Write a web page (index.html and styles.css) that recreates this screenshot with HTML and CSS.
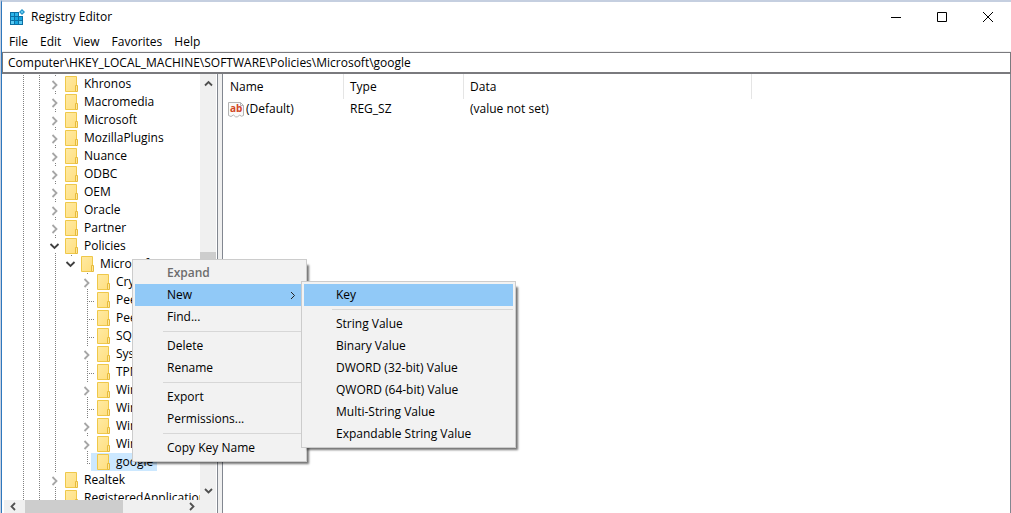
FILE: index.html
```html
<!DOCTYPE html>
<html lang="en">
<head>
<meta charset="utf-8">
<title>Registry Editor</title>
<link rel="stylesheet" href="styles.css">
</head>
<body>
<svg class="defs" aria-hidden="true">
  <defs>
    <linearGradient id="paper" x1="0" y1="0" x2="1" y2="1">
      <stop offset="0" stop-color="#ffeaa3"/>
      <stop offset="1" stop-color="#ffdf80"/>
    </linearGradient>
    <symbol id="folder" viewBox="0 0 16 18">
      <path d="M2.5 1.5h11v15h-11z" fill="url(#paper)" stroke="#efc84a"/>
      <path d="M12.5 10.5h2v6h-2z" fill="#ffe79a" stroke="#e6bb3c"/>
    </symbol>
    <symbol id="closed" viewBox="0 0 16 18">
      <path d="M5.5 6l4 4-4 4" fill="none" stroke="#a6a6a6" stroke-width="1.8"/>
    </symbol>
    <symbol id="open" viewBox="0 0 16 18">
      <path d="M3.5 7l4 4 4-4" fill="none" stroke="#404040" stroke-width="1.8"/>
    </symbol>
  </defs>
</svg>
<main class="window">
  <header class="titlebar">
    <svg class="app-icon" width="16" height="16" viewBox="0 0 16 16" aria-hidden="true">
      <path d="M1 3h9v4h4v9H1z" fill="#0b6fa4"/>
      <path d="M2 4h3v3H2zM6 4h3v3H6zM2 8h3v3H2z" fill="#2cb4ea"/>
      <path d="M6 8h3v3H6zM10 8h3v3h-3zM6 12h3v3H6z" fill="#16a5e0"/>
      <path d="M2 12h3v3H2zM10 12h3v3h-3z" fill="#5ccbf3"/>
      <path d="M13 0l3 3-3 3-3-3z" fill="#1b8fc6"/>
      <path d="M13 1.500l1.500 1.500L13 4.500 11.500 3z" fill="#6fd0f2"/>
    </svg>
    <h1 class="title">Registry Editor</h1>
    <div class="captions">
      <button class="caption" aria-label="Minimize"><svg width="10" height="10" viewBox="0 0 10 10"><path d="M0 5.500h10" stroke="#000"/></svg></button>
      <button class="caption" aria-label="Maximize"><svg width="10" height="10" viewBox="0 0 10 10"><path d="M.5.5h9v9h-9z" fill="none" stroke="#000"/></svg></button>
      <button class="caption" aria-label="Close"><svg width="10" height="10" viewBox="0 0 10 10"><path d="M0 0l10 10M10 0L0 10" stroke="#000"/></svg></button>
    </div>
  </header>
  <nav class="menubar" aria-label="Main menu">
    <button class="menu-title">File</button>
    <button class="menu-title">Edit</button>
    <button class="menu-title">View</button>
    <button class="menu-title">Favorites</button>
    <button class="menu-title">Help</button>
  </nav>
  <input class="address" aria-label="Address" spellcheck="false" value="Computer\HKEY_LOCAL_MACHINE\SOFTWARE\Policies\Microsoft\google">
  <div class="panes">
    <section class="tree-pane" aria-label="Keys">
      <ul class="tree">
        <li class="node"><i class="guide"></i><i class="guide"></i><svg class="toggle"><use href="#closed"/></svg><svg class="icon"><use href="#folder"/></svg><span class="name">Khronos</span></li>
        <li class="node"><i class="guide"></i><i class="guide"></i><svg class="toggle"><use href="#closed"/></svg><svg class="icon"><use href="#folder"/></svg><span class="name">Macromedia</span></li>
        <li class="node"><i class="guide"></i><i class="guide"></i><svg class="toggle"><use href="#closed"/></svg><svg class="icon"><use href="#folder"/></svg><span class="name">Microsoft</span></li>
        <li class="node"><i class="guide"></i><i class="guide"></i><svg class="toggle"><use href="#closed"/></svg><svg class="icon"><use href="#folder"/></svg><span class="name">MozillaPlugins</span></li>
        <li class="node"><i class="guide"></i><i class="guide"></i><svg class="toggle"><use href="#closed"/></svg><svg class="icon"><use href="#folder"/></svg><span class="name">Nuance</span></li>
        <li class="node"><i class="guide"></i><i class="guide"></i><svg class="toggle"><use href="#closed"/></svg><svg class="icon"><use href="#folder"/></svg><span class="name">ODBC</span></li>
        <li class="node"><i class="guide"></i><i class="guide"></i><svg class="toggle"><use href="#closed"/></svg><svg class="icon"><use href="#folder"/></svg><span class="name">OEM</span></li>
        <li class="node"><i class="guide"></i><i class="guide"></i><svg class="toggle"><use href="#closed"/></svg><svg class="icon"><use href="#folder"/></svg><span class="name">Oracle</span></li>
        <li class="node"><i class="guide"></i><i class="guide"></i><svg class="toggle"><use href="#closed"/></svg><svg class="icon"><use href="#folder"/></svg><span class="name">Partner</span></li>
        <li class="node"><i class="guide"></i><i class="guide"></i><svg class="toggle"><use href="#open"/></svg><svg class="icon"><use href="#folder"/></svg><span class="name">Policies</span></li>
        <li class="node"><i class="guide"></i><i class="guide"></i><i class="guide"></i><svg class="toggle last"><use href="#open"/></svg><svg class="icon"><use href="#folder"/></svg><span class="name">Microsoft</span></li>
        <li class="node"><i class="guide"></i><i class="guide"></i><i class="guide"></i><i class="blank"></i><svg class="toggle"><use href="#closed"/></svg><svg class="icon"><use href="#folder"/></svg><span class="name">Crypto</span></li>
        <li class="node"><i class="guide"></i><i class="guide"></i><i class="guide"></i><i class="blank"></i><i class="guide branch"></i><svg class="icon"><use href="#folder"/></svg><span class="name">PeerDist</span></li>
        <li class="node"><i class="guide"></i><i class="guide"></i><i class="guide"></i><i class="blank"></i><i class="guide branch"></i><svg class="icon"><use href="#folder"/></svg><span class="name">Peernet</span></li>
        <li class="node"><i class="guide"></i><i class="guide"></i><i class="guide"></i><i class="blank"></i><i class="guide branch"></i><svg class="icon"><use href="#folder"/></svg><span class="name">SQM</span></li>
        <li class="node"><i class="guide"></i><i class="guide"></i><i class="guide"></i><i class="blank"></i><svg class="toggle"><use href="#closed"/></svg><svg class="icon"><use href="#folder"/></svg><span class="name">System</span></li>
        <li class="node"><i class="guide"></i><i class="guide"></i><i class="guide"></i><i class="blank"></i><i class="guide branch"></i><svg class="icon"><use href="#folder"/></svg><span class="name">TPM</span></li>
        <li class="node"><i class="guide"></i><i class="guide"></i><i class="guide"></i><i class="blank"></i><svg class="toggle"><use href="#closed"/></svg><svg class="icon"><use href="#folder"/></svg><span class="name">Windows</span></li>
        <li class="node"><i class="guide"></i><i class="guide"></i><i class="guide"></i><i class="blank"></i><i class="guide branch"></i><svg class="icon"><use href="#folder"/></svg><span class="name">Windows</span></li>
        <li class="node"><i class="guide"></i><i class="guide"></i><i class="guide"></i><i class="blank"></i><svg class="toggle"><use href="#closed"/></svg><svg class="icon"><use href="#folder"/></svg><span class="name">Windows</span></li>
        <li class="node"><i class="guide"></i><i class="guide"></i><i class="guide"></i><i class="blank"></i><svg class="toggle"><use href="#closed"/></svg><svg class="icon"><use href="#folder"/></svg><span class="name">Windows</span></li>
        <li class="node"><i class="guide"></i><i class="guide"></i><i class="guide"></i><i class="blank"></i><i class="branch end"></i><span class="selected"><svg class="icon"><use href="#folder"/></svg><span class="name">google</span></span></li>
        <li class="node"><i class="guide"></i><i class="guide"></i><svg class="toggle"><use href="#closed"/></svg><svg class="icon"><use href="#folder"/></svg><span class="name">Realtek</span></li>
        <li class="node"><i class="guide"></i><i class="guide"></i><i class="guide"></i><svg class="icon"><use href="#folder"/></svg><span class="name">RegisteredApplications</span></li>
      </ul>
      <div class="vscroll">
        <button class="arrow" aria-label="Scroll up"><svg width="9" height="9" viewBox="0 0 9 9"><path d="M1 6.500l3.500-3.500 3.500 3.500" fill="none" stroke="#505050" stroke-width="1.800"/></svg></button>
        <div class="vthumb"></div>
        <button class="arrow" aria-label="Scroll down"><svg width="9" height="9" viewBox="0 0 9 9"><path d="M1 3l3.500 3.500L8 3" fill="none" stroke="#505050" stroke-width="1.800"/></svg></button>
      </div>
      <div class="hscroll">
        <button class="arrow" aria-label="Scroll left"><svg width="9" height="9" viewBox="0 0 9 9"><path d="M6 1L2.500 4.500 6 8" fill="none" stroke="#505050" stroke-width="1.800"/></svg></button>
        <div class="hthumb"></div>
        <button class="arrow" aria-label="Scroll right"><svg width="9" height="9" viewBox="0 0 9 9"><path d="M3 1l3.500 3.500L3 8" fill="none" stroke="#505050" stroke-width="1.800"/></svg></button>
      </div>
    </section>
    <section class="value-pane" aria-label="Values">
      <table class="values">
        <thead>
          <tr><th class="col-name">Name</th><th class="col-type">Type</th><th class="col-data">Data</th><th class="col-rest"></th></tr>
        </thead>
        <tbody>
          <tr>
            <td><span class="value"><svg width="17" height="17" viewBox="0 0 17 17" aria-hidden="true"><path d="M.5 1.500h12l3 3v10l-2 .8-2-1.300-2 2-2-.2-2-1.800-2.500 1.500-2.500-1z" fill="#fafafa" stroke="#b4b4b4"/><path d="M12.500 1.500v3h3" fill="none" stroke="#b4b4b4"/><text class="glyph" x="2" y="11">ab</text></svg>(Default)</span></td>
            <td>REG_SZ</td><td>(value not set)</td><td></td>
          </tr>
        </tbody>
      </table>
    </section>
  </div>
</main>
<div class="menu context" role="menu">
  <button class="item default" disabled role="menuitem">Expand</button>
  <button class="item active" role="menuitem">New<svg width="6" height="9" viewBox="0 0 6 9" aria-hidden="true"><path d="M1 1l3.500 3.500L1 8" fill="none" stroke="#222"/></svg></button>
  <button class="item" role="menuitem">Find...</button>
  <hr class="rule">
  <button class="item" role="menuitem">Delete</button>
  <button class="item" role="menuitem">Rename</button>
  <hr class="rule">
  <button class="item" role="menuitem">Export</button>
  <button class="item" role="menuitem">Permissions...</button>
  <hr class="rule">
  <button class="item" role="menuitem">Copy Key Name</button>
</div>
<div class="menu submenu" role="menu">
  <button class="item active" role="menuitem">Key</button>
  <hr class="rule">
  <button class="item" role="menuitem">String Value</button>
  <button class="item" role="menuitem">Binary Value</button>
  <button class="item" role="menuitem">DWORD (32-bit) Value</button>
  <button class="item" role="menuitem">QWORD (64-bit) Value</button>
  <button class="item" role="menuitem">Multi-String Value</button>
  <button class="item" role="menuitem">Expandable String Value</button>
</div>
</body>
</html>
```

FILE: styles.css
```css
* { box-sizing: border-box; }

body {
  margin: 0;
  height: 100vh;
  overflow: hidden;
  padding-left: 1px;
  background: #c5cfe0;
  color: #000;
  font: 12px/18px "Segoe UI", "Open Sans", sans-serif;
}

button, input {
  margin: 0;
  padding: 0;
  border: 0;
  background: none;
  color: inherit;
  font: inherit;
}

.defs { position: absolute; width: 0; height: 0; }

.window {
  display: flex;
  flex-direction: column;
  height: 100vh;
  border-top: 2px solid #c5cfe0;
  border-left: 1px solid #2f78bd;
  background: #fff;
}

.titlebar { display: flex; align-items: center; flex: none; height: 29px; padding-left: 7px; }
.title { margin: 0 0 0 6px; font-size: 12px; font-weight: 400; }
.captions { display: flex; margin-left: auto; }
.caption { display: grid; place-items: center; width: 46px; height: 29px; }

.menubar {
  display: flex;
  flex: none;
  gap: 12px;
  height: 21px;
  padding: 1px 7px 0;
  border-bottom: 1px solid #f0f0f0;
}

.address {
  flex: none;
  width: 100%;
  height: 22px;
  padding: 0 5px;
  border: 1px solid #7a7a7e;
  border-bottom-width: 2px;
  background: #fff;
}

.panes { display: grid; grid-template-columns: 216px 1fr; gap: 4px; flex: 1; min-height: 0; background: #f0f0f0; }

.tree-pane {
  display: grid;
  grid-template: minmax(0, 1fr) 13px / minmax(0, 1fr) 16px;
  overflow: hidden;
  padding: 0 1px 0 2px;
  border-right: 1px solid #828790;
  background: #fff;
}
.tree { margin: 0; padding: 1px 0 0 11px; overflow: hidden; list-style: none; }
.node { display: flex; height: 18px; white-space: nowrap; }
.guide, .blank, .toggle, .branch, .icon { flex: none; width: 16px; height: 18px; }
.guide, .toggle {
  background: repeating-linear-gradient(#808080 0 1px, transparent 1px 2px) 8px 0 / 1px 18px no-repeat;
}
.toggle {
  background-image: linear-gradient(#808080, #808080), linear-gradient(#808080, #808080);
  background-position: 8px 0, 8px 16px;
  background-size: 1px 1px;
}
.toggle.last { background-size: 1px 1px, 0 0; }
.branch {
  background:
    repeating-linear-gradient(#808080 0 1px, transparent 1px 2px) 8px 0 / 1px 18px no-repeat,
    repeating-linear-gradient(90deg, #808080 0 1px, transparent 1px 2px) 8px 10px / 8px 1px no-repeat;
}
.branch.end { background-size: 1px 11px, 8px 1px; }
.name { padding: 0 4px 0 5px; }
.selected { display: flex; margin-left: -4px; padding-left: 4px; background: #cce8ff; }

.arrow { display: grid; place-items: center; flex: none; }
.vscroll { display: flex; flex-direction: column; background: #f0f0f0; }
.vscroll .arrow { height: 19px; }
.vthumb { width: 100%; height: 56px; margin: 159px 0 auto; background: #cdcdcd; }
.hscroll { display: flex; grid-column: 1 / -1; padding-right: 16px; background: #f0f0f0; }
.hscroll .arrow { width: 18px; }
.hthumb { width: 98px; height: 13px; margin: 0 auto 0 3px; background: #cdcdcd; }

.value-pane { border-right: 1px solid #828790; border-left: 1px solid #828790; background: #fff; }
.values { width: 100%; table-layout: fixed; border-collapse: separate; border-spacing: 0; }
.values th { height: 25px; padding: 1px 6px 0; border-right: 1px solid #e5e5e5; font-weight: 400; text-align: left; }
.values th:first-child, .values td:first-child { padding-left: 7px; }
.values th.col-rest { border-right: 0; }
.col-name { width: 121px; }
.col-type { width: 120px; }
.col-data { width: 288px; }
.values td { height: 20px; padding: 0 6px; }
.value { display: flex; align-items: center; gap: 1px; margin-left: -2px; }
.glyph { fill: #d24726; font: 700 10px "Open Sans", sans-serif; }

.menu {
  position: absolute;
  padding: 2px;
  border: 1px solid #ccc;
  background: #f2f2f2;
  box-shadow: 4px 4px 2px -2px rgba(0, 0, 0, .55);
}
.context { left: 132px; top: 259px; width: 175px; }
.submenu { left: 301px; top: 281px; width: 215px; }
.item {
  display: flex;
  align-items: center;
  justify-content: space-between;
  width: 100%;
  height: 22px;
  padding: 0 8px 0 32px;
  white-space: nowrap;
}
.item.active { background: #91c9f7; }
.item.default { color: #6d6d6d; font-weight: 600; }
.rule { height: 1px; margin: 3px 0 3px 28px; border: 0; background: #d7d7d7; }
```
